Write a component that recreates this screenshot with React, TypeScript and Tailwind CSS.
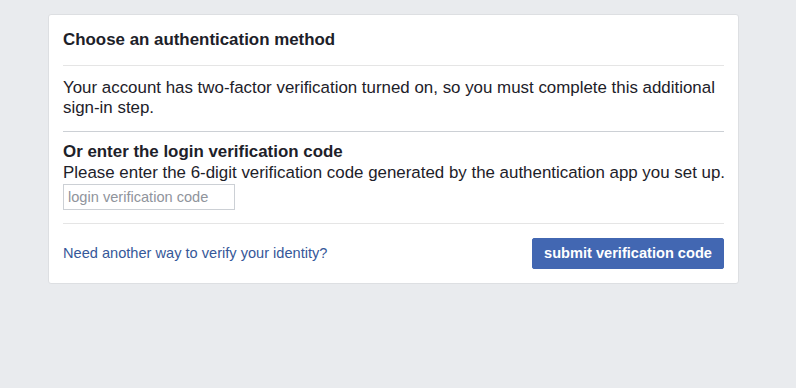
export default function App() {
  return (
    <div
      className="h-[388px] bg-[#e9ebee] pt-[14px] pl-[48px]"
      style={{ fontFamily: '"Liberation Sans", Arial, Helvetica, sans-serif' }}
    >
      <div className="w-[691px] rounded-[3px] border border-[#dddfe2] bg-white px-[14px]">
        {/* Header */}
        <div className="border-b border-[#e5e5e5] pt-[15px] pb-[15px]">
          <h2 className="text-[16.9px] leading-[20px] font-bold text-[#1d2129]">
            Choose an authentication method
          </h2>
        </div>

        {/* Intro */}
        <div className="border-b border-[#ccd0d5] pt-[12px] pb-[13px]">
          <p className="text-[16.9px] leading-[20px] text-[#1d2129]">
            Your account has two-factor verification turned on, so you must complete this additional
            sign-in step.
          </p>
        </div>

        {/* Code entry */}
        <div className="border-b border-[#e5e5e5] pt-[10px] pb-[13px]">
          <h3 className="text-[16.9px] leading-[20px] font-bold text-[#1d2129]">
            Or enter the login verification code
          </h3>
          <p className="whitespace-nowrap text-[16.9px] leading-[21px] text-[#1d2129]">
            Please enter the 6-digit verification code generated by the authentication app you set up.
          </p>
          <input
            type="text"
            placeholder="login verification code"
            className="mt-px block h-[26px] w-[172px] border border-[#ccd0d5] px-[4px] text-[14.6px] text-[#1d2129] placeholder:text-[#90949c] outline-none"
          />
        </div>

        {/* Footer */}
        <div className="flex items-center justify-between pt-[14px] pb-[14px]">
          <a href="#" className="text-[14.6px] text-[#365899]">
            Need another way to verify your identity?
          </a>
          <button className="h-[31px] w-[192px] rounded-[2px] border border-[#4267b2] bg-[#4267b2] text-[14.6px] font-bold text-white">
            submit verification code
          </button>
        </div>
      </div>
    </div>
  );
}
